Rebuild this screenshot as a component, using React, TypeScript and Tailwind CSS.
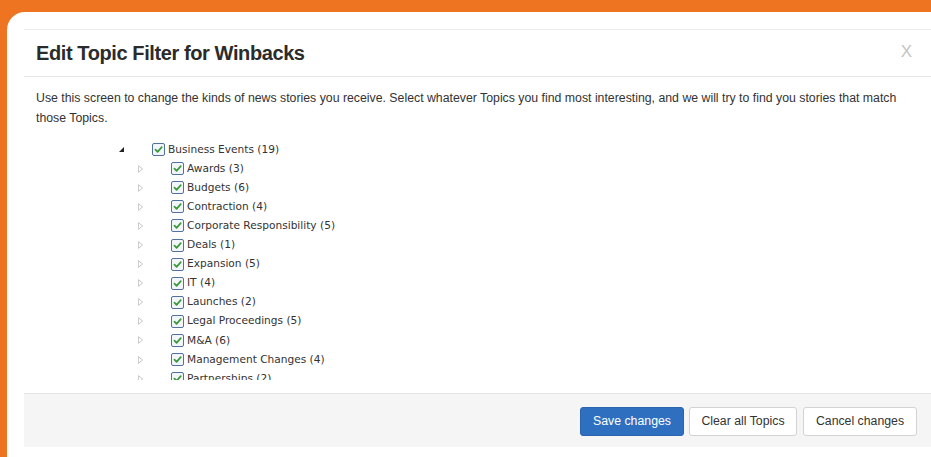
import React from "react";

type Topic = { label: string; count: number };

const CHILD_TOPICS: Topic[] = [
  { label: "Awards", count: 3 },
  { label: "Budgets", count: 6 },
  { label: "Contraction", count: 4 },
  { label: "Corporate Responsibility", count: 5 },
  { label: "Deals", count: 1 },
  { label: "Expansion", count: 5 },
  { label: "IT", count: 4 },
  { label: "Launches", count: 2 },
  { label: "Legal Proceedings", count: 5 },
  { label: "M&A", count: 6 },
  { label: "Management Changes", count: 4 },
  { label: "Partnerships", count: 2 },
];

function CheckBox() {
  return (
    <span className="flex h-[13px] w-[13px] shrink-0 items-center justify-center rounded-[2px] border border-[#52729e] bg-[#f2f5fa]">
      <svg viewBox="0 0 10 10" className="h-[9px] w-[9px]">
        <path
          d="M1.6 5.2 L4 7.6 L8.6 2.4"
          fill="none"
          stroke="#3a9a3a"
          strokeWidth="1.9"
          strokeLinecap="round"
          strokeLinejoin="round"
        />
      </svg>
    </span>
  );
}

function ExpandedArrow() {
  return (
    <svg viewBox="0 0 6 6" className="h-[5px] w-[5px]">
      <polygon points="6,0 6,6 0,6" fill="#222" />
    </svg>
  );
}

function CollapsedArrow() {
  return (
    <svg viewBox="0 0 6 9" className="h-[8px] w-[5px]">
      <polygon points="0.5,0.5 5.5,4.5 0.5,8.5" fill="none" stroke="#b5b5b5" strokeWidth="0.9" />
    </svg>
  );
}

function TopicRow({ topic, depth }: { topic: Topic; depth: number }) {
  return (
    <div className="flex h-[19.1px] items-center" style={{ paddingLeft: depth * 19 }}>
      <span className="flex w-[34px] shrink-0 items-center pl-[1px]">
        {depth === 0 ? <ExpandedArrow /> : <CollapsedArrow />}
      </span>
      <CheckBox />
      <span className="ml-[3px] whitespace-nowrap text-[#333]">
        {topic.label} ({topic.count})
      </span>
    </div>
  );
}

export default function App() {
  return (
    <div className="h-[457px] w-[931px] overflow-hidden bg-[#ef7421] pl-[7px] pt-[12px] font-['Liberation_Sans',Arial,sans-serif]">
      <div className="flex h-[460px] flex-col rounded-tl-[18px] bg-white pl-[17px] pt-[17px]">
        <div className="flex flex-col border-t border-[#ececec]">
          {/* header */}
          <div className="flex h-[47px] items-center justify-between border-b border-[#e6e6e6] pl-[12px] pr-[17px]">
            <h1 className="text-[20px] font-bold tracking-[-0.4px] text-[#2b2b2b]">
              Edit Topic Filter for Winbacks
            </h1>
            <span className="mb-[3px] mr-[2px] text-[17px] text-[#c4c4c4]">X</span>
          </div>

          {/* body */}
          <div className="flex h-[316px] flex-col pl-[12px] pr-[20px] pt-[11px]">
            <p className="text-[12.3px] leading-[20px] text-[#333]">
              Use this screen to change the kinds of news stories you receive. Select whatever Topics you find most
              interesting, and we will try to find you stories that match those Topics.
            </p>
            <div className="mt-[12px] h-[240px] overflow-hidden pl-[82px] font-['DejaVu_Sans',Verdana,sans-serif] text-[10.6px]">
              <TopicRow topic={{ label: "Business Events", count: 19 }} depth={0} />
              {CHILD_TOPICS.map((t) => (
                <TopicRow key={t.label} topic={t} depth={1} />
              ))}
            </div>
          </div>

          {/* footer */}
          <div className="flex h-[54px] items-center justify-end gap-[5px] border-t border-[#e3e3e3] bg-[#f5f5f5] pr-[14px] pt-[2px] text-[12.3px]">
            <button className="h-[29px] w-[104px] rounded-[3px] border border-[#2a64b0] bg-[#2f6fc0] text-white">
              Save changes
            </button>
            <button className="h-[29px] w-[108px] rounded-[3px] border border-[#d2d2d2] bg-white text-[#333]">
              Clear all Topics
            </button>
            <button className="ml-[1px] h-[29px] w-[114px] rounded-[3px] border border-[#d2d2d2] bg-white text-[#333]">
              Cancel changes
            </button>
          </div>
        </div>
      </div>
    </div>
  );
}
